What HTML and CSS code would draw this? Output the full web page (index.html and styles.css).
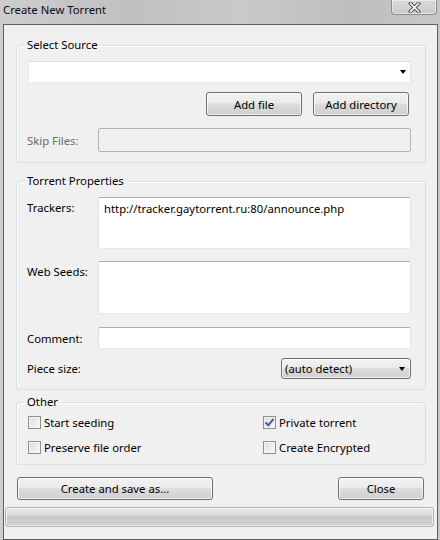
FILE: index.html
```html
<!DOCTYPE html>
<html>
  <head>
    <meta charset="UTF-8">
    <title>Create New Torrent</title>
    <link rel="stylesheet" href="styles.css">
  </head>
  <body>
    <div class="window">
      <!-- Title bar -->
      <div class="titlebar">
        <span class="title">Create New Torrent</span>
        <div class="close-btn">
          <svg width="13" height="11" viewBox="0 0 13 11">
            <path d="M2.5 1.5 L10.5 9.5 M10.5 1.5 L2.5 9.5" stroke="#4b5262" stroke-width="3.6" stroke-linecap="square"/>
            <path d="M2.5 1.5 L10.5 9.5 M10.5 1.5 L2.5 9.5" stroke="#ffffff" stroke-width="1.6" stroke-linecap="square"/>
          </svg>
        </div>
      </div>

      <div class="client">
        <div class="content">
          <!-- Select Source -->
          <fieldset class="group group-source">
            <legend>Select Source</legend>
            <div class="combo"><span class="arrow"></span></div>
            <div class="source-buttons">
              <div class="btn btn-add-file">Add file</div>
              <div class="btn btn-add-dir">Add directory</div>
            </div>
            <div class="row skip-row">
              <span class="label disabled">Skip Files:</span>
              <div class="textbox textbox-disabled"></div>
            </div>
          </fieldset>

          <!-- Torrent Properties -->
          <fieldset class="group group-props">
            <legend>Torrent Properties</legend>
            <div class="row row-top trackers-row">
              <span class="label">Trackers:</span>
              <div class="textbox textarea trackers">http://tracker.gaytorrent.ru:80/announce.php</div>
            </div>
            <div class="row row-top seeds-row">
              <span class="label">Web Seeds:</span>
              <div class="textbox textarea seeds"></div>
            </div>
            <div class="row comment-row">
              <span class="label">Comment:</span>
              <div class="textbox comment"></div>
            </div>
            <div class="row piece-row">
              <span class="label">Piece size:</span>
              <div class="dropdown">(auto detect)<span class="arrow"></span></div>
            </div>
          </fieldset>

          <!-- Other -->
          <fieldset class="group group-other">
            <legend>Other</legend>
            <div class="checks">
              <div class="check"><span class="box"></span>Start seeding</div>
              <div class="check"><span class="box checked"></span>Private torrent</div>
              <div class="check"><span class="box"></span>Preserve file order</div>
              <div class="check"><span class="box"></span>Create Encrypted</div>
            </div>
          </fieldset>

          <div class="bottom-buttons">
            <div class="btn btn-create">Create and save as...</div>
            <div class="btn btn-close">Close</div>
          </div>
        </div>

        <div class="progress"></div>
      </div>
    </div>
  </body>
</html>
```

FILE: styles.css
```css
* {
  box-sizing: border-box;
}
body {
  margin: 0;
  font-family: "Noto Sans", sans-serif;
  font-size: 11.3px;
  color: #000;
  background: #c4c4c4;
}
.window {
  width: 440px;
  height: 540px;
  display: flex;
  flex-direction: column;
  background: linear-gradient(90deg, #cdcdcd 0%, #c0c0c0 30%, #c9c9c9 55%, #bebebe 80%, #c8c8c8 100%);
}

/* Title bar */
.titlebar {
  height: 24px;
  flex: none;
  display: flex;
  justify-content: space-between;
  align-items: flex-start;
  padding-left: 3px;
}
.title {
  line-height: 16px;
  padding-top: 2px;
  color: #0a0a14;
}
.close-btn {
  width: 46px;
  height: 15px;
  margin-right: 3px;
  border: 1px solid #8c8c8c;
  border-top: none;
  border-radius: 0 0 4px 4px;
  background: linear-gradient(#d9d9d9, #cbcbcb);
  box-shadow: inset 0 0 0 1px rgba(255, 255, 255, 0.5);
  display: flex;
  align-items: center;
  justify-content: center;
}

/* Client area */
.client {
  flex: 1;
  margin: 0 2px 0 3px;
  border: 1px solid #5f5f5f;
  background: #f0f0f0;
  display: flex;
  flex-direction: column;
}
.content {
  padding: 12px 11px 0 12px;
}

/* Group boxes */
.group {
  margin: 0;
  border: 1px solid #d5dfe5;
  border-radius: 3px;
  padding: 8px 14px 10px 11px;
  box-shadow: inset 1px 1px 0 #fff;
}
.group legend {
  margin-left: -4px;
  padding: 0 4px 0 3px;
  line-height: 16px;
}
.group-props {
  margin-top: 10px;
}
.group-other {
  margin-top: 4px;
  padding: 4px 14px 8px 11px;
}

/* Controls */
.combo {
  height: 22px;
  background: #fff;
  border: 1px solid #e3e9ef;
  border-top-color: #dadee4;
  border-radius: 2px;
  display: flex;
  justify-content: flex-end;
  align-items: center;
  padding-right: 4px;
}
.arrow {
  width: 0;
  height: 0;
  border-left: 3.5px solid transparent;
  border-right: 3.5px solid transparent;
  border-top: 4px solid #000;
}
.source-buttons {
  margin-top: 9px;
  display: flex;
  justify-content: flex-end;
  gap: 11px;
  padding-right: 2px;
}
.btn {
  height: 24px;
  border: 1px solid #707070;
  border-radius: 3px;
  background: linear-gradient(#f2f2f2 0%, #ebebeb 45%, #dddddd 50%, #cfcfcf 100%);
  box-shadow: inset 0 0 0 1px rgba(255, 255, 255, 0.7);
  display: flex;
  align-items: center;
  justify-content: center;
}
.btn-add-file {
  width: 96px;
}
.btn-add-dir {
  width: 96px;
}
.row {
  display: flex;
  align-items: center;
}
.row-top {
  align-items: flex-start;
}
.label {
  width: 71px;
  flex: none;
  margin-left: -1px;
}
.row-top .label {
  padding-top: 3px;
}
.label.disabled {
  color: #6d6d6d;
}
.skip-row {
  margin-top: 12px;
}
.textbox {
  flex: 1;
  height: 24px;
  background: #fff;
  border: 1px solid #e3e9ef;
  border-top-color: #abadb3;
  border-left-color: #dbdfe6;
  border-radius: 2px;
}
.textbox-disabled {
  background: #f0f0f0;
  border-color: #b5b5b5;
  border-radius: 2px;
}
.textarea {
  padding: 3px 5px;
  line-height: 16px;
}
.trackers {
  height: 52px;
}
.seeds-row {
  margin-top: 12px;
}
.seeds {
  height: 53px;
}
.comment-row {
  margin-top: 13px;
}
.comment {
  height: 22px;
}
.piece-row {
  margin-top: 9px;
  justify-content: space-between;
}
.dropdown {
  width: 130px;
  height: 21px;
  border: 1px solid #707070;
  border-radius: 3px;
  background: linear-gradient(#f2f2f2 0%, #ebebeb 45%, #dddddd 50%, #cfcfcf 100%);
  box-shadow: inset 0 0 0 1px rgba(255, 255, 255, 0.7);
  display: flex;
  align-items: center;
  justify-content: space-between;
  padding: 0 5px 0 3px;
}

/* Checkboxes */
.checks {
  display: grid;
  grid-template-columns: 235px 1fr;
  row-gap: 8px;
}
.check {
  height: 17px;
  display: flex;
  align-items: center;
  gap: 3px;
}
.box {
  width: 13px;
  height: 13px;
  border: 1px solid #8e8f8f;
  background: linear-gradient(135deg, #dcdcdc, #fbfbfb);
  box-shadow: inset 0 0 0 1px #f4f4f4;
  position: relative;
}
.box.checked::after {
  content: "";
  position: absolute;
  left: 3px;
  top: 0px;
  width: 3px;
  height: 7px;
  border: solid #4a5f97;
  border-width: 0 2px 2px 0;
  transform: rotate(40deg);
}

/* Bottom */
.bottom-buttons {
  margin-top: 12px;
  display: flex;
  justify-content: space-between;
  padding: 0 2px 0 1px;
}
.bottom-buttons .btn {
  height: 23px;
}
.btn-create {
  width: 196px;
}
.btn-close {
  width: 86px;
}
.progress {
  margin: 7px 3px 0 1px;
  height: 20px;
  border: 1px solid #b2b2b2;
  border-radius: 3px;
  background: linear-gradient(#e8e8e8 0%, #dedede 35%, #cbcbcb 50%, #cfcfcf 100%);
  box-shadow: inset 0 0 0 1px rgba(255, 255, 255, 0.6);
}
```
